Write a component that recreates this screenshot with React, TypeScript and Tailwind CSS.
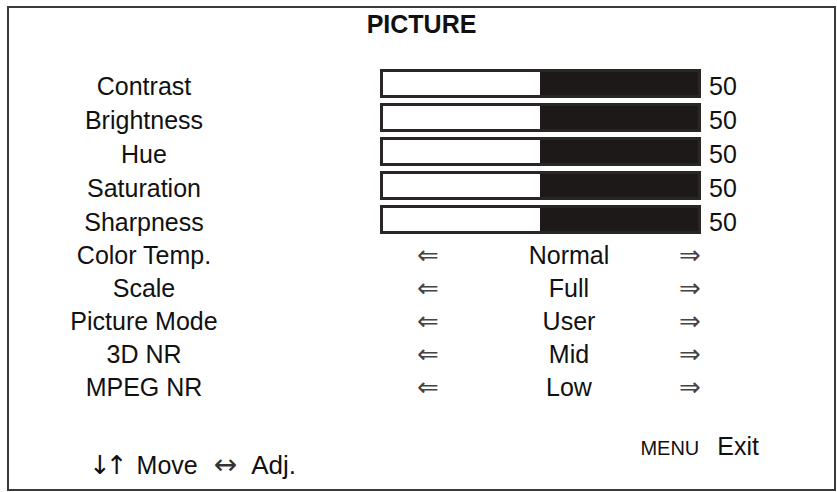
// OSD picture menu
const sliders = [
  { label: "Contrast", value: 50 },
  { label: "Brightness", value: 50 },
  { label: "Hue", value: 50 },
  { label: "Saturation", value: 50 },
  { label: "Sharpness", value: 50 },
];

const options = [
  { label: "Color Temp.", value: "Normal" },
  { label: "Scale", value: "Full" },
  { label: "Picture Mode", value: "User" },
  { label: "3D NR", value: "Mid" },
  { label: "MPEG NR", value: "Low" },
];

export default function App() {
  return (
    <div className="w-[837px] h-[492px] bg-white overflow-hidden pt-[6px] pl-[7px] font-['Liberation_Sans','DejaVu_Sans',sans-serif] text-[#111]">
      <div className="w-[829px] h-[485px] border-2 border-[#3a3a3a] flex flex-col">
        {/* title */}
        <div className="pt-[2px] text-center font-bold text-[25px] leading-[28px]">PICTURE</div>

        {/* sliders */}
        <div className="mt-[31px] flex flex-col">
          {sliders.map((s) => (
            <div key={s.label} className="flex items-start h-[34px] text-[25px] leading-[34px]">
              <div className="w-[270px] text-center">{s.label}</div>
              <div className="ml-[101px] w-[321px] h-[29px] border-[3px] border-[#2a2626] flex">
                <div className="w-[157px] bg-white" />
                <div className="flex-1 bg-[#1d1919]" />
              </div>
              <div className="ml-[8px]">{s.value}</div>
            </div>
          ))}
        </div>

        {/* options */}
        <div className="flex flex-col">
          {options.map((o) => (
            <div key={o.label} className="flex items-start h-[33px] text-[25px] leading-[33px]">
              <div className="w-[270px] text-center">{o.label}</div>
              <div className="ml-[129px] w-[40px] text-center font-['DejaVu_Sans',sans-serif] text-[26px] text-[#444]">⇐</div>
              <div className="ml-[21px] w-[200px] text-center">{o.value}</div>
              <div className="ml-[1px] w-[40px] text-center font-['DejaVu_Sans',sans-serif] text-[26px] text-[#444]">⇒</div>
            </div>
          ))}
        </div>

        {/* footer hints */}
        <div className="flex items-start justify-between text-[25px] leading-[28px]">
          <div className="ml-[80px] mt-[47px] flex items-baseline">
            <span className="font-['DejaVu_Sans',sans-serif] text-[26px] tracking-[-5px]">↓↑</span>
            <span className="ml-[14px]">Move</span>
            <span className="ml-[16px] font-['DejaVu_Sans',sans-serif] text-[28px] text-[#333]">↔</span>
            <span className="ml-[14px] text-[26px]">Adj.</span>
          </div>
          <div className="mr-[75px] mt-[28px] flex items-baseline">
            <span className="text-[20px]">MENU</span>
            <span className="ml-[18px]">Exit</span>
          </div>
        </div>
      </div>
    </div>
  );
}
